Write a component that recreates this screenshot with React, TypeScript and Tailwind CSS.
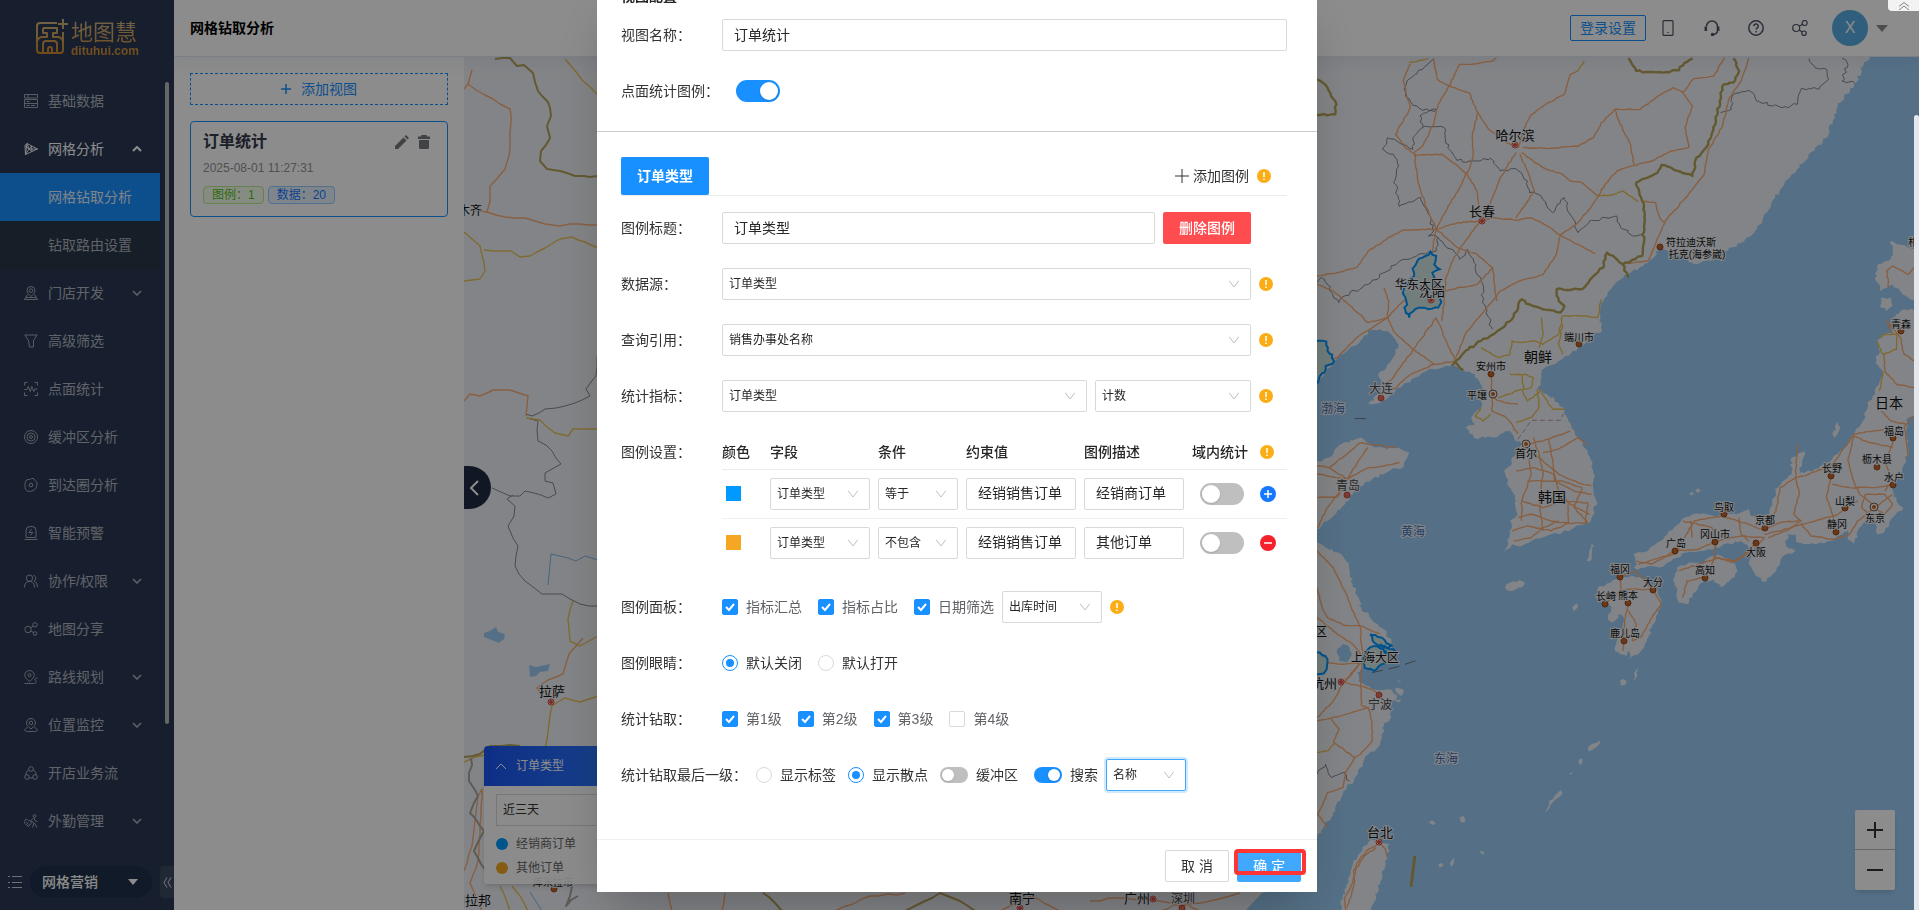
import { useId, useState } from "react";
import type { ReactNode } from "react";
import clsx from "clsx";

type Point = [number, number];

const toPoints = (path: string): Point[] =>
  path.split(" ").map((pair) => pair.split(",").map(Number) as Point);

// Breaks every segment into small uneven steps, so coasts and borders look natural
const rough = (path: string, amount: number) => {
  const points = toPoints(path);
  let seed = points.length * 7 + points[0][0];
  const random = () => {
    seed = (seed * 9301 + 49297) % 233280;
    return seed / 233280 - 0.5;
  };
  const result: Point[] = [points[0]];
  for (let i = 1; i < points.length; i++) {
    const [x0, y0] = points[i - 1];
    const [x1, y1] = points[i];
    const steps = Math.max(1, Math.round(Math.hypot(x1 - x0, y1 - y0) / 9));
    for (let s = 1; s < steps; s++) {
      result.push([
        Math.round(x0 + ((x1 - x0) * s) / steps + random() * amount),
        Math.round(y0 + ((y1 - y0) * s) / steps + random() * amount),
      ]);
    }
    result.push([x1, y1]);
  }
  return result.map((point) => point.join(",")).join(" ");
};

const SEA =
  "1442,160 1425,195 1405,245 1375,285 1355,325 1352,350 1335,385 1330,410 1300,440 1275,480 1240,520 1215,560 1190,600 1170,640 1160,670 1140,700 1110,725 1075,750 1040,775 1000,788 985,785 960,765 930,752 900,740 885,770 870,785 850,798 825,815 800,835 785,850 765,885 755,900 748,920 745,960 752,990 722,1000 715,1020 690,1040 670,1060 640,1080 605,1100 595,1120 595,1150 585,1165 610,1180 640,1205 655,1225 665,1260 690,1310 715,1350 728,1390 730,1440 730,1480 738,1500 730,1540 720,1565 680,1580 665,1590 620,1600 600,1610 570,1620 545,1635 520,1630 500,1655 515,1600 520,1580 515,1560 535,1540 530,1500 520,1470 505,1430 500,1410 520,1390 520,1370 530,1355 545,1330 525,1310 515,1290 490,1300 470,1310 445,1305 430,1315 400,1280 425,1270 415,1250 440,1220 445,1180 440,1150 425,1120 395,1110 375,1095 340,1100 300,1110 270,1130 240,1150 210,1180 180,1205 150,1210 155,1200 180,1180 185,1155 175,1120 200,1090 220,1060 228,1030 215,1010 200,990 180,985 150,990 130,1020 100,1045 70,1070 50,1100 30,1130 15,1150 0,1150 0,1385 18,1380 50,1370 80,1330 130,1310 160,1335 200,1345 225,1340 255,1355 248,1375 240,1400 210,1405 190,1420 160,1435 130,1455 110,1480 90,1510 60,1545 45,1560 20,1585 0,1590 0,1620 20,1625 40,1640 80,1660 100,1700 110,1750 125,1790 133,1830 150,1835 165,1865 190,1885 210,1920 215,1950 190,1990 150,2000 120,2015 125,2040 150,2055 165,2065 200,2065 225,2085 205,2120 210,2150 190,2175 185,2210 175,2240 150,2260 130,2300 115,2330 95,2360 80,2390 65,2420 55,2450 35,2480 18,2510 0,2520 0,2740 1580,2740 1580,160";

const ISLANDS = [
  "150,2525 170,2518 205,2530 197,2560 195,2590 182,2640 170,2690 150,2740 85,2740 78,2700 95,2650 110,2590 130,2555 150,2525",
  "1510,940 1530,925 1570,925 1570,1240 1540,1250 1535,1290 1540,1340 1535,1380 1520,1420 1500,1460 1510,1500 1527,1520 1500,1550 1480,1590 1460,1600 1455,1560 1430,1560 1410,1590 1400,1630 1385,1615 1385,1590 1340,1620 1300,1630 1255,1625 1250,1600 1230,1600 1225,1630 1250,1650 1215,1670 1200,1710 1175,1743 1145,1720 1130,1690 1135,1650 1110,1620 1060,1635 1010,1650 970,1655 930,1680 900,1700 870,1695 840,1705 833,1660 870,1650 920,1600 955,1560 985,1540 1040,1545 1065,1540 1110,1535 1130,1525 1135,1545 1180,1545 1190,1500 1205,1460 1240,1420 1240,1370 1280,1345 1270,1370 1260,1420 1300,1405 1340,1380 1385,1330 1400,1300 1430,1250 1440,1200 1465,1150 1475,1110 1455,1085 1465,1060 1460,1020 1480,1000 1500,995 1495,960 1510,940",
  "945,1700 985,1685 1010,1690 1035,1665 1060,1665 1095,1690 1100,1710 1080,1740 1060,1760 1040,1735 1010,1745 985,1780 970,1810 950,1805 945,1770 935,1740 945,1700",
  "775,1745 800,1725 840,1730 870,1740 890,1760 905,1800 895,1830 880,1880 860,1940 845,1960 820,1978 830,1930 815,1965 785,1950 790,1920 810,1860 800,1840 775,1850 770,1810 735,1790 740,1765 775,1745",
  "1495,720 1540,740 1570,740 1570,900 1545,895 1520,870 1500,850 1470,870 1455,830 1462,790 1490,780 1500,750 1495,720",
  "1470,890 1495,890 1500,915 1485,930 1468,915 1470,890",
  "502,1760 515,1745 540,1737 554,1745 545,1760 520,1770 502,1760",
  "1345,1300 1360,1260 1366,1280 1358,1300 1350,1310 1345,1300",
  "832,2040 838,2010 845,2000 843,2025 832,2040",
  "797,2040 805,2034 815,2040 812,2052 800,2054 797,2040",
  "715,2240 725,2230 748,2218 738,2238 718,2252 715,2240",
  "605,2435 615,2400 630,2385 645,2368 650,2375 640,2390 620,2410 610,2430 605,2435",
  "384,2450 395,2445 400,2455 388,2464 384,2450",
  "306,2465 314,2458 324,2466 318,2472 306,2465",
  "675,1820 688,1808 690,1820 680,1832 675,1820",
  "772,1835 785,1835 795,1850 780,1865 770,1860 772,1835",
  "330,2590 340,2586 344,2594 334,2600 330,2590",
  "362,2592 372,2570 370,2588 364,2598 362,2592",
  "438,2550 446,2552 450,2560 440,2558 438,2550",
  "712,1680 722,1630 732,1632 722,1680 712,1680",
  "978,1478 984,1472 988,1480 980,1484 978,1478",
  "992,1468 1000,1462 1006,1470 998,1476 992,1468",
  "692,2285 697,2272 700,2288 695,2292 692,2285",
  "668,2318 676,2314 672,2322 668,2318",
  "215,2035 240,2038 230,2044 215,2035",
  "222,2060 240,2066 236,2085 225,2078 222,2060",
  "215,2095 235,2092 230,2104 215,2095",
];

const ORANGE_ROADS = [
  "258,190 240,240 258,320 235,370 220,400 245,440 270,460 272,500 282,560 300,620 325,685 318,720 310,800",
  "318,175 328,235 358,255 330,310 318,370 290,435 268,455",
  "358,255 385,190 430,188 470,180 480,170",
  "358,255 410,275 432,335 418,400 420,470 405,515 375,580 350,630 325,685",
  "432,335 460,385 500,420 535,440",
  "690,210 670,220 655,280 600,315 570,340 550,385 537,440",
  "547,440 620,442 690,436 730,410 750,365 785,325 850,325 890,290 935,260 960,275 985,235 1040,225 1068,170",
  "960,275 985,315 965,380 975,440 930,450 880,480 832,494 790,510 760,550 742,585 715,630 685,670 645,703",
  "785,325 805,385 825,430 835,490",
  "530,455 490,530 470,590 450,640 400,720 370,770 350,830 345,900 340,960",
  "545,455 600,500 650,520 670,540 700,545 742,585",
  "540,460 560,510 578,570 530,650",
  "268,462 340,460 375,490 405,520 430,570 435,640",
  "325,685 380,665 440,660 475,650 530,658 570,650 610,675 645,703 690,730 735,758",
  "325,685 240,687 190,720 150,750 120,800 70,815 18,825",
  "325,685 380,740 430,760 470,800 480,900",
  "645,703 635,760 600,820 540,840 490,870 470,900 400,1000 375,1070",
  "1130,170 1110,240 1080,290 1060,380 1025,450 1015,520 960,600 915,660 900,700 870,780 815,788",
  "860,600 890,605 900,650 912,665",
  "18,850 60,870 95,905 150,965 200,950 240,900 300,880 345,870 430,850 470,800",
  "18,1080 70,1070 120,1010 200,950 215,990 260,1040 320,1090 375,1080 350,1020 325,950 270,1040 200,1150",
  "200,1150 215,1165 260,1120 320,1090",
  "190,860 203,900 200,950",
  "466,1120 470,1180 468,1230 500,1245 520,1270 535,1300",
  "468,1190 500,1205 535,1210",
  "557,1330 600,1320 650,1300 670,1290",
  "560,1340 600,1380 640,1420 690,1445 725,1455",
  "560,1340 570,1420 545,1500 545,1560",
  "575,1310 590,1360 600,1420 590,1500 600,1590",
  "600,1355 640,1345 690,1310 710,1330",
  "530,1410 575,1400 630,1420 640,1470 670,1510 720,1540",
  "560,1440 600,1440 650,1440 700,1460 680,1520 715,1565",
  "615,1315 625,1380 630,1440 680,1470 725,1480",
  "535,1550 570,1540 620,1560 665,1567 715,1565",
  "545,1500 600,1520 650,1500 715,1505 710,1565",
  "520,1590 560,1575 620,1590 665,1567 665,1510",
  "525,1620 570,1610 600,1580 640,1560",
  "18,1395 50,1400 95,1360 130,1325 220,1340",
  "18,1420 95,1435 150,1400 190,1395 230,1385",
  "50,1400 95,1435 130,1370 150,1340",
  "18,1490 70,1488 95,1440",
  "20,1580 40,1530 95,1440",
  "18,1650 60,1700 90,1770 110,1830 130,1880 135,1960 130,2040 132,2110",
  "18,1760 35,1830 45,1850 85,1872 130,1875 180,1900",
  "18,1850 60,1890 110,1930 140,1970 90,2040 60,2100 18,2150",
  "18,1980 80,1990 130,1985 90,2045 160,2065 180,2080",
  "18,2160 80,2145 150,2120 160,2165 160,2220 130,2260 115,2270 60,2225",
  "55,2155 75,2185 60,2225",
  "115,2270 90,2320 85,2360 45,2375 20,2440 45,2480",
  "130,2110 160,2130 165,2090",
  "175,2530 150,2545 130,2570 112,2610 115,2640 105,2690 95,2720",
  "170,2540 140,2565 120,2600 108,2650 90,2690 92,2740",
  "180,2525 195,2545 198,2570",
  "1555,1245 1530,1280 1540,1370",
  "1500,1000 1485,960 1520,1010 1530,1060 1555,1080",
  "1478,1060 1480,1110 1510,1150 1555,1160",
  "1470,1230 1495,1260 1535,1270",
  "1503,1290 1500,1330 1480,1380 1500,1440 1480,1470",
  "1503,1280 1450,1290 1400,1300 1345,1390 1285,1420 1250,1430",
  "1400,1305 1430,1320 1500,1340",
  "1400,1305 1385,1380 1400,1440 1415,1480 1450,1510",
  "1341,1430 1330,1490 1345,1540 1350,1580",
  "1345,1450 1390,1460 1460,1460 1500,1450",
  "1250,1430 1260,1480 1245,1540 1265,1560 1225,1590 1180,1610",
  "1255,1330 1250,1430 1210,1460 1200,1530 1170,1580",
  "1453,1520 1410,1560 1390,1600 1350,1615 1290,1605 1265,1570",
  "1453,1520 1480,1540 1500,1510 1480,1480 1430,1480 1420,1520 1453,1550",
  "1455,1520 1500,1480",
  "1170,1600 1240,1580 1265,1570 1350,1545 1410,1500",
  "1170,1585 1210,1565 1260,1560",
  "840,1680 880,1690 940,1650 1000,1645 1045,1620 1110,1605 1170,1610",
  "845,1690 900,1670 940,1660 990,1560 1060,1545 1130,1570 1170,1590",
  "1045,1620 1035,1580 960,1560",
  "985,1610 980,1560",
  "1150,1625 1100,1680 1040,1670 1045,1625",
  "1170,1610 1140,1650 1090,1680 1040,1670",
  "1105,1550 1110,1600 1130,1620",
  "950,1710 1000,1690 1050,1670 1090,1685",
  "1017,1730 1030,1700 1040,1670",
  "960,1790 970,1740 1010,1730",
  "798,1730 840,1710 880,1765 890,1770",
  "798,1730 805,1780 820,1805 810,1860 805,1950",
  "760,1810 790,1780 800,1765 880,1765",
  "885,1770 905,1810 880,1850 855,1905 830,1920 840,1870 820,1830",
  "1490,860 1485,810 1500,795 1540,820 1555,800",
];

const YELLOW_ROADS = [
  "255,185 275,182 305,172",
  "690,210 706,180",
  "742,585 775,582 805,570 845,602",
  "750,895 740,950 705,945 650,945 640,1000 600,1030 580,1020 545,1025 520,1020 515,1060 485,1070 440,1040",
  "595,950 600,1000 590,1040",
  "545,1120 550,1165 570,1160 575,1130 555,1120 515,1120",
  "485,1190 510,1180 545,1165 560,1200 600,1165",
  "585,1165 590,1220 570,1250 530,1265",
  "440,1220 425,1245 445,1260 465,1240",
  "595,1175 625,1225 655,1225",
  "650,1060 640,1030 650,970",
  "1465,1010 1480,1000 1510,1000 1510,1045 1475,1060 1460,1020",
  "1475,1110 1470,1150 1465,1170",
  "18,2255 45,2250 65,2225",
];

const PROVINCES = [
  "320,172 290,205 255,235 242,265 250,290 275,315 290,328 325,325 300,335 283,345 290,380 345,380 355,440 378,478 410,480 465,472 490,510 530,503 560,540 565,575 595,585 625,635 655,590 690,695 720,660 790,645 800,680 830,705 860,705",
  "290,380 265,410 265,445 200,410 187,445 215,460 228,495 218,540 230,617 285,590 305,640 318,690 305,705 330,710 370,750 385,775 405,745 425,800 445,850 445,900 470,985",
  "330,710 325,750 280,760 240,775 190,815 150,850 80,890 75,905 30,830 18,845",
  "1057,335 1085,325 1090,280 1130,268 1150,300 1215,320 1255,310 1265,262 1310,265 1335,235 1330,205 1300,200 1285,172",
  "1370,172 1385,190 1370,240 1403,247",
  "18,2320 40,2290 55,2330 90,2315 102,2340",
];

const NATIONAL = [
  "820,172 840,210 910,215 950,208 965,185 985,172",
  "1090,172 1105,210 1090,245 1065,250 1055,300 1045,360 1020,440 995,470 985,525 905,492 895,515 840,545 855,600 862,640 855,765 805,790 765,755 755,800 735,820 700,865 635,865 640,900 655,915 645,935 600,925 565,910 545,895 520,955 490,985 440,1020 400,1050 365,1095",
  "375,1085 395,1108",
  "18,235 45,260 68,310 65,340 18,342",
  "805,790 820,830",
];

const REGIONS = [
  "310,752 325,765 320,790 334,805 315,815 320,845 335,880 338,905 330,920 305,925 290,920 270,925 255,950 245,925 248,900 240,870 262,830 270,795 290,770 310,752",
  "0,1022 42,1022 45,1050 62,1080 40,1095 20,1145 0,1145",
  "165,1935 190,1950 205,1960 208,1985 185,1990 165,2010 140,2000 138,1970 150,1945 165,1935",
  "155,1900 185,1910 212,1935 200,1942 165,1925 155,1900",
  "180,1930 205,1945 219,1952 205,1956 190,1948 180,1930",
  "0,1950 25,1955 45,1975 40,2010 22,2020 0,2030",
];

// Roads and borders west of the dialog, in page pixels
const WEST_ORANGE = [
  "464,88 468,83 472,69",
  "468,83 485,94 500,103 510,108 511,114 509,155 505,168 490,185 490,200 487,211 505,216 525,217 545,223 560,225 570,223 598,224",
  "470,209 487,211",
  "464,400 470,393 480,395 493,389 510,389 528,395 526,415",
  "540,691 537,687 548,679 563,673 569,653 583,637",
  "464,870 472,845 478,795 482,788 478,860 470,882 482,910",
];
const WEST_YELLOW = [
  "464,231 480,245 484,262 485,270 480,278 464,280",
  "484,249 511,250 520,256 530,255 545,247 560,238 572,236 585,241 598,247",
  "565,58 582,79 598,94",
  "526,417 540,419 555,432 568,435 573,428 598,428",
  "464,761 475,756 495,753 515,751 530,753 545,747 552,705 565,697 580,701 598,695",
  "573,600 568,618 570,640 580,645 598,635",
  "500,885 510,910",
  "512,885 520,895 528,910",
];
const WEST_GREY = [
  "598,350 596,375 586,388 590,395 575,402 545,408 532,415 526,413",
  "527,417 538,420 538,440 552,450 561,463 545,472 545,480 553,482 556,493 548,497 525,490 520,495 510,495 492,487",
  "513,494 507,498 515,505 514,515 508,525 513,537 518,545 515,565 525,580 542,593 562,593 580,603 598,605",
];
const WEST_NATIONAL = [
  "495,58 510,57 517,65 524,64 533,72 538,90 548,101 551,115 547,125 550,137 541,150 540,160 547,168 560,170 575,175 598,175",
  "464,756 480,753 490,745 520,745",
];
const SOUTH_ROADS = [
  "668,892 672,910",
  "725,892 722,910",
  "835,910 870,895 905,892",
  "1000,910 1030,895 1060,910",
  "1090,900 1120,897 1150,899 1180,905 1210,900 1240,892",
  "1160,910 1182,900 1200,910",
];
const SOUTH_NATIONAL = ["763,892 775,902 782,910", "905,910 925,900 940,892 960,900 975,910"];

type City = {
  name: string;
  x: number;
  y: number;
  size: number;
  kind?: "sea" | "minor" | "end" | "start";
  dot?: [number, number, "red" | "brown" | "capital" | "ring"];
};

const cities: City[] = [
  { name: "哈尔滨", x: 1515, y: 134, size: 13, dot: [1515, 144, "ring"] },
  { name: "长春", x: 1482, y: 210, size: 13, dot: [1482, 220, "ring"] },
  { name: "符拉迪沃斯", x: 1691, y: 241, size: 10, dot: [1660, 246, "brown"] },
  { name: "托克(海参崴)", x: 1697, y: 253, size: 10 },
  { name: "沈阳", x: 1432, y: 290, size: 13, dot: [1431, 299, "ring"] },
  { name: "华东大区", x: 1419, y: 284, size: 12 },
  { name: "大连", x: 1381, y: 388, size: 12, kind: "minor", dot: [1381, 397, "red"] },
  { name: "端川市", x: 1579, y: 336, size: 10, dot: [1579, 343, "brown"] },
  { name: "朝鲜", x: 1538, y: 356, size: 14 },
  { name: "安州市", x: 1491, y: 365, size: 10, dot: [1491, 373, "brown"] },
  { name: "平壤", x: 1477, y: 394, size: 10, dot: [1493, 393, "capital"] },
  { name: "渤海", x: 1333, y: 408, size: 12, kind: "sea" },
  { name: "首尔", x: 1526, y: 453, size: 11, dot: [1526, 443, "capital"] },
  { name: "韩国", x: 1552, y: 496, size: 14 },
  { name: "青岛", x: 1348, y: 485, size: 12, kind: "minor", dot: [1347, 494, "red"] },
  { name: "黄海", x: 1413, y: 531, size: 12, kind: "sea" },
  { name: "日本", x: 1889, y: 402, size: 14 },
  { name: "青森", x: 1901, y: 323, size: 10, dot: [1901, 330, "brown"] },
  { name: "福岛", x: 1894, y: 430, size: 10, dot: [1893, 437, "brown"] },
  { name: "枥木县", x: 1877, y: 458, size: 10, dot: [1877, 466, "brown"] },
  { name: "长野", x: 1832, y: 467, size: 10, dot: [1831, 475, "brown"] },
  { name: "水户", x: 1894, y: 476, size: 10, dot: [1893, 484, "brown"] },
  { name: "山梨", x: 1845, y: 500, size: 10, dot: [1845, 507, "brown"] },
  { name: "静冈", x: 1837, y: 523, size: 10, dot: [1836, 531, "brown"] },
  { name: "东京", x: 1875, y: 517, size: 10, dot: [1874, 506, "capital"] },
  { name: "鸟取", x: 1724, y: 506, size: 10, dot: [1724, 513, "brown"] },
  { name: "京都", x: 1765, y: 519, size: 10, dot: [1765, 527, "brown"] },
  { name: "冈山市", x: 1715, y: 533, size: 10, dot: [1715, 541, "brown"] },
  { name: "大阪", x: 1756, y: 551, size: 10, dot: [1756, 542, "brown"] },
  { name: "广岛", x: 1676, y: 542, size: 10, dot: [1675, 550, "brown"] },
  { name: "福冈", x: 1620, y: 568, size: 10, dot: [1620, 576, "brown"] },
  { name: "高知", x: 1705, y: 569, size: 10, dot: [1705, 577, "brown"] },
  { name: "大分", x: 1653, y: 581, size: 10, dot: [1653, 589, "brown"] },
  { name: "长崎", x: 1606, y: 595, size: 10, dot: [1605, 603, "brown"] },
  { name: "熊本", x: 1628, y: 594, size: 10, dot: [1628, 602, "brown"] },
  { name: "鹿儿岛", x: 1625, y: 632, size: 10, dot: [1624, 640, "brown"] },
  { name: "札幌", x: 1908, y: 241, size: 10, kind: "start" },
  { name: "上海大区", x: 1375, y: 657, size: 12 },
  { name: "区", x: 1321, y: 631, size: 12 },
  { name: "杭州", x: 1324, y: 682, size: 13, dot: [1341, 681, "ring"] },
  { name: "宁波", x: 1380, y: 704, size: 12, kind: "minor", dot: [1379, 694, "red"] },
  { name: "东海", x: 1446, y: 758, size: 12, kind: "sea" },
  { name: "台北", x: 1380, y: 831, size: 13, dot: [1379, 841, "ring"] },
  { name: "南宁", x: 1022, y: 897, size: 13, dot: [1020, 907, "ring"] },
  { name: "广州", x: 1137, y: 897, size: 13, dot: [1153, 898, "ring"] },
  { name: "深圳", x: 1183, y: 898, size: 12, kind: "minor", dot: [1182, 907, "red"] },
  { name: "乌鲁木齐", x: 482, y: 210, size: 12, kind: "end" },
  { name: "拉萨", x: 552, y: 690, size: 13, dot: [551, 701, "ring"] },
  { name: "印拉邦", x: 491, y: 899, size: 13, kind: "end" },
  { name: "库米拉市", x: 553, y: 881, size: 10, dot: [554, 888, "brown"] },
];

type LinesProps = { paths: string[]; stroke: string; width?: number; jitter?: number };
const Lines = ({ paths, stroke, width = 1, jitter = 3 }: LinesProps) => (
  <g fill="none" stroke={stroke} strokeWidth={width} strokeLinejoin="round">
    {paths.map((path) => (
      <polyline key={path} points={rough(path, jitter)} vectorEffect="non-scaling-stroke" />
    ))}
  </g>
);

const Dot = ({ dot: [x, y, type] }: { dot: NonNullable<City["dot"]> }) => {
  if (type === "brown") return <circle cx={x} cy={y} r="3" fill="#c4652a" stroke="#8f4a20" />;
  if (type === "red") return <circle cx={x} cy={y} r="3" fill="#ea6a56" stroke="#b9503f" />;
  return (
    <g>
      <circle cx={x} cy={y} r={type === "ring" ? 3 : 4} fill="#f6efe9" stroke={type === "ring" ? "#dc4b41" : "#6f5a4a"} />
      <circle cx={x} cy={y} r="2" fill={type === "ring" ? "#dc4b41" : "#c4652a"} />
    </g>
  );
};

const MapCanvas = () => (
  <svg
    className="absolute inset-0 size-full bg-[#eff1f6]"
    viewBox="464 56 1455 854"
    preserveAspectRatio="xMinYMin slice"
    role="img"
    aria-label="地图"
  >
    <g transform="translate(1310 0) scale(0.3884 0.3333)">
      <polygon points={rough(SEA, 9)} fill="#9bcdf5" />
      {ISLANDS.map((island) => (
        <polygon key={island} points={rough(island, 9)} fill="#eff1f6" />
      ))}
      <polygon points={rough("70,1945 85,1930 100,1935 108,1960 95,1985 75,1980 70,1945", 6)} fill="#9bcdf5" />
      <Lines paths={PROVINCES} stroke="#85888f" jitter={9} />
      <Lines paths={ORANGE_ROADS} stroke="#f7ae78" width={1.4} />
      <Lines paths={YELLOW_ROADS} stroke="#e8c25c" width={1.4} />
      <Lines paths={NATIONAL} stroke="#b5a35a" width={2.4} jitter={6} />
      <g fill="#cfe6e2" stroke="#0096ff" strokeWidth="2">
        {REGIONS.map((region) => (
          <polygon key={region} points={rough(region, 8)} vectorEffect="non-scaling-stroke" />
        ))}
      </g>
      <path d="M535 1315 L570 1258 H645 L652 1238" fill="none" stroke="#b59ba9" strokeDasharray="5 3" vectorEffect="non-scaling-stroke" />
      <path d="M160 2015 L225 1998 L275 1978 M115 1253 H148" fill="none" stroke="#6d7480" strokeDasharray="11 6" vectorEffect="non-scaling-stroke" />
      <path d="M270 2565 L260 2658" fill="none" stroke="#b5a35a" strokeWidth="3" vectorEffect="non-scaling-stroke" />
    </g>
    <Lines paths={WEST_GREY} stroke="#85888f" jitter={2} />
    <Lines paths={WEST_ORANGE} stroke="#f7ae78" width={1.4} jitter={1} />
    <Lines paths={WEST_YELLOW} stroke="#e8c25c" width={1.4} jitter={1} />
    <Lines paths={WEST_NATIONAL} stroke="#b5a35a" width={2} jitter={2} />
    <Lines paths={SOUTH_ROADS} stroke="#f7ae78" width={1.4} jitter={2} />
    <Lines paths={SOUTH_NATIONAL} stroke="#b5a35a" width={2} jitter={2} />
    <Lines paths={["471,757 469,780 478,795 470,812 484,830 474,850 486,870", "572,885 566,905 578,895"]} stroke="#a8a69c" width={2} jitter={3} />
    <polygon points="484,632 490,630 496,626 498,631 505,633 504,638 499,642 494,640 484,636" fill="#9bcdf5" />
    <polygon points="529,664 536,666 550,663 548,670 540,671 536,675 530,676" fill="#9bcdf5" />
    <path d="M548 584 L551 553 L568 557 L576 560 L585 555 L598 559 M530 891 L542 910" fill="none" stroke="#7fb9ea" />
    <polygon points="1245,910 1262,892 1320,880 1320,910" fill="#9bcdf5" />
    {cities.map((city) => city.dot && <Dot key={city.name} dot={city.dot} />)}
    <g stroke="#eff1f6" strokeWidth="2" paintOrder="stroke" dominantBaseline="central">
      {cities.map((city) => (
        <text
          key={city.name}
          x={city.x}
          y={city.y}
          fontSize={city.size}
          textAnchor={city.kind === "end" ? "end" : city.kind === "start" ? "start" : "middle"}
          fill={city.kind === "sea" ? "#3d6fb4" : city.kind === "minor" ? "#4a4a4a" : "#111"}
        >
          {city.name}
        </text>
      ))}
    </g>
  </svg>
);

const NavIcon = ({ children }: { children: ReactNode }) => (
  <svg className="size-[14px] shrink-0" viewBox="0 0 14 14" fill="none" stroke="currentColor" strokeWidth="0.9">
    {children}
  </svg>
);

type MenuItem = { label: string; icon: ReactNode; arrow?: "up" | "down"; children?: string[] };
const menu: MenuItem[] = [
  {
    label: "基础数据",
    icon: <path d="M.5.5h13V4H.5zM.5 5.500h13v8H.5zM.5 9.500h13M4 .5V4M2.500 7.500h3M2.500 11.500h3M7 11.500h4" />,
  },
  {
    label: "网格分析",
    icon: <path d="M3 1.500l10.500 5.500L1.500 12.500zM1 3.500L3 1.500l2 5.500-4-3.500zM5 7L1.500 12.500M5 7l8.500 0M5 7l2.500-3M5 7l3 2.500M7.500 4L8 9.500M1 3.500l.5 9" />,
    arrow: "up",
    children: ["网格钻取分析", "钻取路由设置"],
  },
  {
    label: "门店开发",
    icon: <path d="M7 10.500C4.500 8 3 6.500 3 4.500a4 4 0 018 0c0 2-1.500 3.500-4 6zM3.500 8.500L.5 13.500h13l-3-5M2 11.500h10M7 2.800a1.800 1.800 0 100 3.600 1.800 1.800 0 000-3.600" />,
    arrow: "down",
  },
  { label: "高级筛选", icon: <path d="M.8 1h12.400L9.500 6.500v6.500H5.500L4.500 6.500z" /> },
  {
    label: "点面统计",
    icon: <path d="M.5 3.500v-3h3M10.500.5h3v3M13.500 10.500v3h-3M3.500 13.500h-3v-3M.5 7.500H3l1.300-3 2 5 1.500-5 2 5 1.200-2.500h2.500" />,
  },
  {
    label: "缓冲区分析",
    icon: (
      <>
        <circle cx="7" cy="7" r="6.500" />
        <circle cx="7" cy="7" r="4" />
        <circle cx="7" cy="7" r="1.500" />
      </>
    ),
  },
  {
    label: "到达圈分析",
    icon: (
      <>
        <path d="M4 1.500c2 .5 3-1.500 5-1 2 .5 1.500 2 3 3s1 3 .5 5-1.500 3-3.500 4-5 1.500-6.500 0S1 9 1 6.500s1-5 3-5z" />
        <circle cx="7" cy="7" r="1.800" />
      </>
    ),
  },
  {
    label: "智能预警",
    icon: <path d="M2 11.500V4.500a4 4 0 014-4h2a4 4 0 014 4v7zM.5 13.500h13M7.800 3L4.800 6.500h4L6.200 9.500" />,
  },
  {
    label: "协作/权限",
    icon: <path d="M5.500 1a3.200 3.200 0 100 6.400 3.200 3.200 0 000-6.400zM.5 13.500c0-4 2-6 5-6s5 2 5 6M9.500 1.500c3 .5 3 4.500.5 5.500 2 1 3.500 3 3.500 6" />,
    arrow: "down",
  },
  {
    label: "地图分享",
    icon: (
      <>
        <circle cx="4" cy="7.500" r="3.200" />
        <circle cx="11" cy="2.800" r="2.200" />
        <circle cx="11" cy="11.500" r="1.800" />
        <path d="M6.700 5.700L9.300 4M6.900 9l2.500 1.500" />
      </>
    ),
  },
  {
    label: "路线规划",
    icon: (
      <>
        <path d="M5.500 11.500C2.500 9 .8 7.500.8 5.200a4.700 4.700 0 019.400 0c0 2.300-1.700 3.800-4.700 6.300zM.5 13.500h9c3 0 3.500-2 2-3s0-2.500 2-2.500" />
        <circle cx="5.500" cy="5.200" r="1.500" />
      </>
    ),
    arrow: "down",
  },
  {
    label: "位置监控",
    icon: (
      <>
        <path d="M7 11C4 8.500 2.500 7 2.500 5a4.500 4.500 0 019 0c0 2-1.500 3.500-4.500 6zM3.500 9.500c-3 1-4 4 0 4h7c4 0 3-3 0-4" />
        <circle cx="7" cy="5" r="1.800" />
      </>
    ),
    arrow: "down",
  },
  {
    label: "开店业务流",
    icon: (
      <>
        <circle cx="7" cy="3" r="2.300" />
        <circle cx="3" cy="11" r="2.300" />
        <circle cx="11" cy="11" r="2.300" />
        <path d="M4.800 4C2.500 5 2 7 2 9M9.200 4C11.500 5 12 7 12 9M5.300 12h3.400" />
      </>
    ),
  },
  {
    label: "外勤管理",
    icon: <path d="M10.500.6a1.400 1.400 0 100 2.800 1.400 1.400 0 000-2.800zM9.500 4L7 6.500l3 2.500-1.500 4.500M10 4l1.500 3 2 .5M10.500 9l2.500 4.500M3.500 5.500a2.500 2.500 0 00-3 3.500L4.500 12.500 7 9.500a2 2 0 00-3-2.500M2.500 8l2 2.500" />,
    arrow: "down",
  },
];

const Arrow = ({ up }: { up?: boolean }) => (
  <svg className="h-[6px] w-[10px]" viewBox="0 0 10 6" fill="none" stroke="currentColor" strokeWidth={up ? 2 : 1.5}>
    <path d={up ? "M1 5l4-4 4 4" : "M1 1l4 4 4-4"} />
  </svg>
);

const Sidebar = () => (
  <aside className="flex w-[174px] shrink-0 flex-col bg-[#2b3a56] text-sm text-[#b0b5bf]">
    <div className="flex h-[77px] shrink-0 items-start gap-[2px] pt-[18px] pl-[35px]">
      <svg className="h-[37px] w-[34px]" viewBox="0 0 34 37" fill="none" stroke="url(#gold)" strokeWidth="2" strokeLinejoin="round">
        <defs>
          <linearGradient id="gold" x1="0" y1="0" x2="0" y2="1">
            <stop offset="0" stopColor="#cdb787" />
            <stop offset="1" stopColor="#d08a2c" />
          </linearGradient>
        </defs>
        <path d="M22 5H5a3 3 0 00-3 3v24a3 3 0 003 3h20a3 3 0 003-3V14M28 1v10M23 6h10M8 10h14v5h-4v4h5c3 0 4 2 5 4M8 10v5h4v4H7c-3 0-4 2-5 4M8 35v-9a3 3 0 013-3h8a3 3 0 013 3v9M13 35v-4a2 2 0 014 0v4" />
      </svg>
      <div className="bg-linear-to-b from-[#cdb787] to-[#d08a2c] bg-clip-text pt-[2px] text-transparent">
        <p className="text-[22px] leading-[26px]">地图慧</p>
        <p className="text-xs leading-[10px] font-bold">dituhui.com</p>
      </div>
    </div>
    <div className="flex min-h-0 flex-1 overflow-hidden">
      <nav className="w-[160px]">
        {menu.map(({ label, icon, arrow, children }) => (
          <div key={label}>
            <a
              href="#"
              className={clsx("flex h-12 items-center gap-[10px] pr-[18px] pl-6", arrow === "up" && "text-white")}
            >
              <NavIcon>{icon}</NavIcon>
              <span className="flex-1">{label}</span>
              {arrow && <Arrow up={arrow === "up"} />}
            </a>
            {children?.map((child, index) => (
              <a
                key={child}
                href="#"
                className={clsx("flex h-12 items-center pl-12", index === 0 ? "bg-[#1890ff] text-[#e8f1fb]" : "bg-[#293947]")}
              >
                {child}
              </a>
            ))}
          </div>
        ))}
      </nav>
      <div className="mt-[5px] ml-[5px] h-[642px] w-1 rounded-sm bg-[#b9bcc0]" />
    </div>
    <div className="flex h-14 shrink-0 items-center">
      <button className="ml-2" aria-label="菜单">
        <svg className="size-[14px]" viewBox="0 0 14 14" stroke="#c9cdd5">
          <path d="M0 1.500h2M4 1.500h10M0 7.500h2M4 7.500h10M0 12.500h2M4 12.500h10" />
        </svg>
      </button>
      <button className="ml-2 flex h-8 w-[122px] items-center justify-between rounded-full bg-[#203049] pr-[14px] pl-3 font-medium text-white">
        网格营销
        <svg className="h-[6px] w-[10px]" viewBox="0 0 10 6" fill="#fff">
          <path d="M0 0h10L5 6z" />
        </svg>
      </button>
      <button className="ml-2 flex h-8 w-[14px] items-center justify-center rounded-l bg-[#3b4963]" aria-label="收起">
        <svg className="h-[11px] w-[9px]" viewBox="0 0 9 11" fill="none" stroke="#dde0e6">
          <path d="M4 0.500L1 5.500l3 5M8 .5L5 5.500l3 5" />
        </svg>
      </button>
    </div>
  </aside>
);

const Header = () => (
  <header className="relative z-10 flex h-[57px] shrink-0 items-center border-b border-[#e0e6f0] bg-white pr-[31px] pl-4 shadow-[0_4px_16px_rgba(40,60,100,0.08)]">
    <h1 className="flex-1 text-sm font-bold text-black">网格钻取分析</h1>
    <button className="h-[26px] w-[76px] rounded-xs border border-[#1890ff] text-sm text-[#1890ff]">登录设置</button>
    <div className="ml-[14px] flex items-center gap-7 text-[#4e5468]">
      <button aria-label="手机">
        <svg className="size-4" viewBox="0 0 16 16" fill="none" stroke="currentColor" strokeWidth="1.200">
          <rect x="3" y=".6" width="10" height="14.800" rx="1" />
          <path d="M7.300 12.500h1.400" />
        </svg>
      </button>
      <button aria-label="客服">
        <svg className="size-4" viewBox="0 0 16 16" fill="none" stroke="currentColor" strokeWidth="1.500">
          <path d="M2.500 6.500a5.500 5.500 0 0111 0v4c0 2-2 3.700-4.500 4" />
          <path d="M1.800 6.500v4.500M14.200 6.500v4.500" strokeWidth="2.500" />
          <circle cx="8.500" cy="14.500" r="1" fill="currentColor" />
        </svg>
      </button>
      <button aria-label="帮助">
        <svg className="size-4" viewBox="0 0 16 16" fill="none" stroke="currentColor" strokeWidth="1.500">
          <circle cx="8" cy="8" r="7.200" />
          <path d="M5.800 6.200a2.200 2.200 0 114 1.200c-.7.800-1.700 1-1.700 2.200M8.100 11v1.500" />
        </svg>
      </button>
      <button aria-label="分享">
        <svg className="size-4" viewBox="0 0 16 16" fill="none" stroke="currentColor" strokeWidth="1.200">
          <circle cx="4.200" cy="8" r="3.500" />
          <circle cx="12.700" cy="3" r="2.500" />
          <circle cx="12" cy="13.200" r="2.200" />
          <path d="M7.300 6.200l3.200-1.900M7.200 10l3 2" />
        </svg>
      </button>
    </div>
    <button className="ml-6 flex items-center gap-2" aria-label="账户">
      <span className="flex size-9 items-center justify-center rounded-full bg-[#57aee2] text-base text-white">X</span>
      <svg className="h-[7px] w-3" viewBox="0 0 12 7" fill="#8c8c8c">
        <path d="M0 0h12L6 7z" />
      </svg>
    </button>
  </header>
);

const ViewList = () => (
  <section className="w-[290px] shrink-0 bg-white px-4 pt-4">
    <button className="flex h-8 w-full items-center justify-center gap-[10px] border border-dashed border-[#1890ff] text-sm text-[#1890ff]">
      <svg className="size-[10px]" viewBox="0 0 10 10" stroke="currentColor" strokeWidth="1.500">
        <path d="M5 0v10M0 5h10" />
      </svg>
      添加视图
    </button>
    <article className="mt-4 h-24 rounded border border-[#1890ff] px-3 pt-[9px]">
      <div className="flex items-center">
        <h2 className="flex-1 text-base leading-[22px] font-bold text-[#333a49]">订单统计</h2>
        <button aria-label="编辑" className="text-[#75797f]">
          <svg className="size-[14px]" viewBox="0 0 14 14" fill="currentColor">
            <path d="M0 11l8.500-8.500L11.500 5.500 3 14H0zM9.500 1.500L11 0l3 3-1.500 1.500z" />
          </svg>
        </button>
        <button aria-label="删除" className="mr-1 ml-2 text-[#75797f]">
          <svg className="size-[14px]" viewBox="0 0 14 14" fill="currentColor">
            <path d="M4.500 0h5l.7 1.500H13V4H1V1.500h2.800zM2 5h10v7.500a1.500 1.500 0 01-1.500 1.500h-7A1.500 1.500 0 012 12.500z" />
          </svg>
        </button>
      </div>
      <p className="mt-[7px] text-xs leading-4 text-[#909399]">2025-08-01 11:27:31</p>
      <div className="mt-[10px] flex gap-1 text-xs leading-4">
        <span className="rounded border border-[#b7eb8f] bg-[#f6ffed] px-2 text-[#52c41a]">图例：1</span>
        <span className="rounded border border-[#91caff] bg-[#e6f4ff] px-2 text-[#1677ff]">数据：20</span>
      </div>
    </article>
  </section>
);

const MapView = () => (
  <main className="relative flex-1 overflow-hidden">
    <MapCanvas />
    <button
      aria-label="收起面板"
      className="absolute top-[409px] left-0 flex h-[43px] w-[27px] items-center rounded-r-full bg-[#202b42] pl-[5px]"
    >
      <svg className="h-4 w-[10px]" viewBox="0 0 10 16" fill="none" stroke="#fff" strokeWidth="2">
        <path d="M9 1L2 8l7 7" />
      </svg>
    </button>
    <div className="absolute bottom-[26px] left-5 w-[220px] overflow-hidden rounded bg-white/90 text-xs shadow-md">
      <div className="flex h-10 items-center gap-[10px] bg-linear-to-r from-[#1c55f5] to-[#3a8bff] pl-3 text-white">
        <svg className="h-[6px] w-[10px]" viewBox="0 0 10 6" fill="none" stroke="currentColor">
          <path d="M0 6l5-5 5 5" />
        </svg>
        订单类型
      </div>
      <div className="px-3 pt-2 pb-1">
        <select aria-label="时间范围" className="h-8 w-full appearance-none border border-[#d9d9d9] px-[6px] text-[#333]">
          <option>近三天</option>
        </select>
        <ul className="mt-[6px] leading-6 text-[#666]">
          <li className="flex items-center gap-2">
            <span className="size-3 rounded-full bg-[#0099ff]" />
            经销商订单
          </li>
          <li className="flex items-center gap-2">
            <span className="size-3 rounded-full bg-[#f5a623]" />
            其他订单
          </li>
        </ul>
      </div>
    </div>
    <div className="absolute right-6 bottom-5 flex flex-col rounded-xs bg-white shadow-md">
      <button aria-label="放大" className="flex size-10 items-center justify-center border-b border-[#bbb]">
        <svg className="size-4" viewBox="0 0 16 16" stroke="#333" strokeWidth="2">
          <path d="M8 0v16M0 8h16" />
        </svg>
      </button>
      <button aria-label="缩小" className="flex size-10 items-center justify-center">
        <svg className="size-4" viewBox="0 0 16 16" stroke="#333" strokeWidth="2">
          <path d="M0 8h16" />
        </svg>
      </button>
    </div>
  </main>
);

const Warning = () => (
  <svg className="size-[14px] shrink-0" viewBox="0 0 14 14" role="img" aria-label="提示">
    <circle cx="7" cy="7" r="7" fill="#faad14" />
    <path d="M7 3v5M7 9.500V11" stroke="#fff" strokeWidth="1.500" />
  </svg>
);

type SelectProps = { label: string; options: string[]; className: string; focused?: boolean };
const Select = ({ label, options, className, focused }: SelectProps) => (
  <div className={clsx("relative h-8 shrink-0", className)}>
    <select
      aria-label={label}
      className={clsx(
        "size-full appearance-none rounded-xs border bg-white pr-6 pl-[6px] text-xs text-[#262626] outline-none",
        focused ? "border-[#40a9ff] shadow-[0_0_0_2px_rgba(24,144,255,0.2)]" : "border-[#d9d9d9]"
      )}
    >
      {options.map((option) => (
        <option key={option}>{option}</option>
      ))}
    </select>
    <svg
      className="pointer-events-none absolute top-3 right-3 h-2 w-[10px]"
      viewBox="0 0 10 8"
      fill="none"
      stroke="#bfbfbf"
    >
      <path d="M0 .5l5 6.500 5-6.500" />
    </svg>
  </div>
);

const TextInput = ({ label, value, className }: { label: string; value: string; className: string }) => (
  <input
    type="text"
    aria-label={label}
    defaultValue={value}
    className={clsx(
      "h-8 rounded-xs border border-[#d9d9d9] px-[11px] pb-[3px] text-sm text-[#262626] outline-none",
      className
    )}
  />
);

const Switch = ({ label, on, small }: { label: string; on?: boolean; small?: boolean }) => (
  <input
    type="checkbox"
    role="switch"
    aria-label={label}
    defaultChecked={on}
    className={clsx(
      "relative shrink-0 appearance-none rounded-full bg-[#bfbfbf] before:absolute before:top-[2px] before:left-[2px] before:rounded-full before:bg-white before:shadow-sm checked:bg-[#1890ff]",
      small
        ? "h-4 w-7 before:size-3 checked:before:left-[14px]"
        : "h-[22px] w-11 before:size-[18px] checked:before:left-[24px]"
    )}
  />
);

const Checkbox = ({ label, on }: { label: string; on?: boolean }) => {
  const id = useId();
  return (
    <span className="flex items-center gap-2 text-[#606266]">
      <span className="relative size-4">
        <input
          id={id}
          type="checkbox"
          defaultChecked={on}
          className="peer block size-4 appearance-none rounded-xs border border-[#d9d9d9] bg-white checked:border-[#1890ff] checked:bg-[#1890ff]"
        />
        <svg
          className="pointer-events-none absolute inset-0 size-4 opacity-0 peer-checked:opacity-100"
          viewBox="0 0 16 16"
          fill="none"
          stroke="#fff"
          strokeWidth="2"
        >
          <path d="M4 8l3 3 5-6" />
        </svg>
      </span>
      <label htmlFor={id}>{label}</label>
    </span>
  );
};

type RadioProps = { name: string; label: string; checked: boolean; onSelect: () => void };
const Radio = ({ name, label, checked, onSelect }: RadioProps) => (
  <label className="flex items-center gap-2">
    <input
      type="radio"
      name={name}
      checked={checked}
      onChange={onSelect}
      className="relative size-4 appearance-none rounded-full border border-[#d9d9d9] bg-white before:absolute before:top-[3px] before:left-[3px] before:size-2 before:rounded-full checked:border-[#1890ff] checked:before:bg-[#1890ff]"
    />
    {label}
  </label>
);

const Row = ({ label, children }: { label: string; children: ReactNode }) => (
  <div className="mb-6 flex min-h-8 items-start">
    <span className="w-[101px] shrink-0 leading-8">{label}</span>
    <div className="flex min-h-8 min-w-0 flex-1 items-center">{children}</div>
  </div>
);

const legends = [
  { color: "bg-[#0099ff]", condition: "等于", value: "经销销售订单", text: "经销商订单" },
  { color: "bg-[#f5a623]", condition: "不包含", value: "经销销售订单", text: "其他订单" },
];

const LegendTable = () => (
  <table className="w-full table-fixed">
    <colgroup>
      <col className="w-12" />
      <col className="w-[108px]" />
      <col className="w-[88px]" />
      <col className="w-[118px]" />
      <col className="w-[108px]" />
      <col className="w-[68px]" />
      <col />
    </colgroup>
    <thead>
      <tr className="h-[33px] border-b border-[#ececec] text-left">
        {["颜色", "字段", "条件", "约束值", "图例描述", "域内统计"].map((title) => (
          <th key={title} className="p-0 font-medium text-[#262626]">
            {title}
          </th>
        ))}
        <th className="p-0">
          <Warning />
        </th>
      </tr>
    </thead>
    <tbody>
      {legends.map(({ color, condition, value, text }, index) => (
        <tr key={text} className={clsx("h-[49px]", index === 0 && "border-b border-[#f0f0f0]")}>
          <td className="p-0 pl-1">
            <button aria-label="选择颜色" className={clsx("block h-[15px] w-[15px]", color)} />
          </td>
          <td className="p-0">
            <Select label="字段" options={["订单类型"]} className="w-[100px]" />
          </td>
          <td className="p-0">
            <Select label="条件" options={[condition]} className="w-20" />
          </td>
          <td className="p-0">
            <TextInput label="约束值" value={value} className="block w-[110px]" />
          </td>
          <td className="p-0">
            <TextInput label="图例描述" value={text} className="block w-[100px]" />
          </td>
          <td className="p-0 pl-2">
            <span className="flex">
              <Switch label="域内统计" />
            </span>
          </td>
          <td className="p-0">
            <button aria-label={index === 0 ? "添加" : "移除"} className="block">
              <svg className="size-4" viewBox="0 0 16 16" stroke="#fff" strokeWidth="1.500">
                <circle cx="8" cy="8" r="8" stroke="none" fill={index === 0 ? "#1677ff" : "#f5222d"} />
                <path d={index === 0 ? "M8 4v8M4 8h8" : "M4 8h8"} />
              </svg>
            </button>
          </td>
        </tr>
      ))}
    </tbody>
  </table>
);

const ViewDialog = () => {
  const [eye, setEye] = useState("默认关闭");
  const [lastLevel, setLastLevel] = useState("显示散点");

  return (
    <div role="dialog" aria-label="视图配置" className="w-[720px] shrink-0 bg-white text-sm text-[#333] shadow-2xl">
      <div className="px-6">
        <h3 className="mb-3 leading-[22px] font-bold text-[#262626]">视图配置</h3>
        <Row label="视图名称：">
          <TextInput label="视图名称" value="订单统计" className="mr-[6px] flex-1" />
        </Row>
        <Row label="点面统计图例：">
          <span className="flex pl-[14px]">
            <Switch label="点面统计图例" on />
          </span>
        </Row>
      </div>
      <div className="border-t border-[#ccc] px-6 pt-[25px]">
        <div className="mr-[6px] mb-4 flex items-end justify-between border-b border-[#ececec]">
          <button className="h-[38px] w-[88px] rounded-xs bg-[#1890ff] font-bold text-white">订单类型</button>
          <div className="flex h-[38px] items-center gap-2 pr-4">
            <button className="flex items-center gap-1">
              <svg className="size-[14px]" viewBox="0 0 14 14" stroke="currentColor">
                <path d="M7 0v14M0 7h14" />
              </svg>
              添加图例
            </button>
            <Warning />
          </div>
        </div>
        <Row label="图例标题：">
          <TextInput label="图例标题" value="订单类型" className="mr-2 flex-1" />
          <button className="mr-[42px] h-8 w-[88px] rounded-xs bg-[#ff4d4f] font-medium text-white">删除图例</button>
        </Row>
        <Row label="数据源：">
          <Select label="数据源" options={["订单类型"]} className="mr-2 w-[529px]" />
          <Warning />
        </Row>
        <Row label="查询引用：">
          <Select label="查询引用" options={["销售办事处名称"]} className="mr-2 w-[529px]" />
          <Warning />
        </Row>
        <Row label="统计指标：">
          <Select label="统计指标" options={["订单类型"]} className="mr-2 w-[365px]" />
          <Select label="统计方式" options={["计数"]} className="mr-2 w-[156px]" />
          <Warning />
        </Row>
        <Row label="图例设置：">
          <div className="mr-[6px] flex-1">
            <LegendTable />
          </div>
        </Row>
        <Row label="图例面板：">
          <div className="flex gap-4">
            <Checkbox label="指标汇总" on />
            <Checkbox label="指标占比" on />
            <Checkbox label="日期筛选" on />
          </div>
          <Select label="日期字段" options={["出库时间"]} className="mx-2 w-[100px]" />
          <Warning />
        </Row>
        <Row label="图例眼睛：">
          <div className="flex gap-4">
            {["默认关闭", "默认打开"].map((option) => (
              <Radio key={option} name="eye" label={option} checked={eye === option} onSelect={() => setEye(option)} />
            ))}
          </div>
        </Row>
        <Row label="统计钻取：">
          <div className="flex gap-4">
            <Checkbox label="第1级" on />
            <Checkbox label="第2级" on />
            <Checkbox label="第3级" on />
            <Checkbox label="第4级" />
          </div>
        </Row>
        <div className="flex h-8 items-center">
          <span className="mr-[9px]">统计钻取最后一级：</span>
          <div className="mr-3 flex gap-3">
            {["显示标签", "显示散点"].map((option) => (
              <Radio
                key={option}
                name="last-level"
                label={option}
                checked={lastLevel === option}
                onSelect={() => setLastLevel(option)}
              />
            ))}
          </div>
          <Switch label="缓冲区" small />
          <span className="mr-4 ml-2">缓冲区</span>
          <Switch label="搜索" small on />
          <span className="mx-2">搜索</span>
          <Select label="搜索字段" options={["名称"]} className="w-20" focused />
        </div>
      </div>
      <div className="mt-12 flex justify-end gap-2 border-t border-[#f0f0f0] px-4 py-[10px]">
        <button className="h-8 w-16 rounded-xs border border-[#d9d9d9]">取 消</button>
        <div className="relative">
          <button className="h-8 w-16 rounded-xs bg-[#40a9ff] text-white">确 定</button>
          <div className="pointer-events-none absolute -top-px -left-[3px] h-[26px] w-[72px] rounded border-4 border-[#ff3434]" />
        </div>
      </div>
    </div>
  );
};

export default function App() {
  return (
    <div className="flex h-screen overflow-hidden font-['Liberation_Sans','Noto_Sans_CJK_SC',sans-serif]">
      <Sidebar />
      <div className="flex min-w-0 flex-1 flex-col">
        <Header />
        <div className="flex min-h-0 flex-1">
          <ViewList />
          <MapView />
        </div>
      </div>
      <div className="fixed inset-0 z-20 flex flex-col items-center justify-end overflow-hidden bg-black/45 pr-[5px] pb-[18px]">
        <ViewDialog />
      </div>
      <div className="fixed top-[115px] right-0 bottom-0 z-20 w-[5px] rounded-t bg-[#e4e7ec]" />
      <button
        aria-label="展开"
        className="fixed top-0 right-0 z-20 flex h-[11px] w-[31px] items-center justify-center rounded-bl bg-[#f2f2f2]"
      >
        <svg className="h-2 w-[10px]" viewBox="0 0 10 8" fill="none" stroke="#7d828c">
          <path d="M0 4.500l5-4 5 4M0 8l5-4 5 4" />
        </svg>
      </button>
    </div>
  );
}
